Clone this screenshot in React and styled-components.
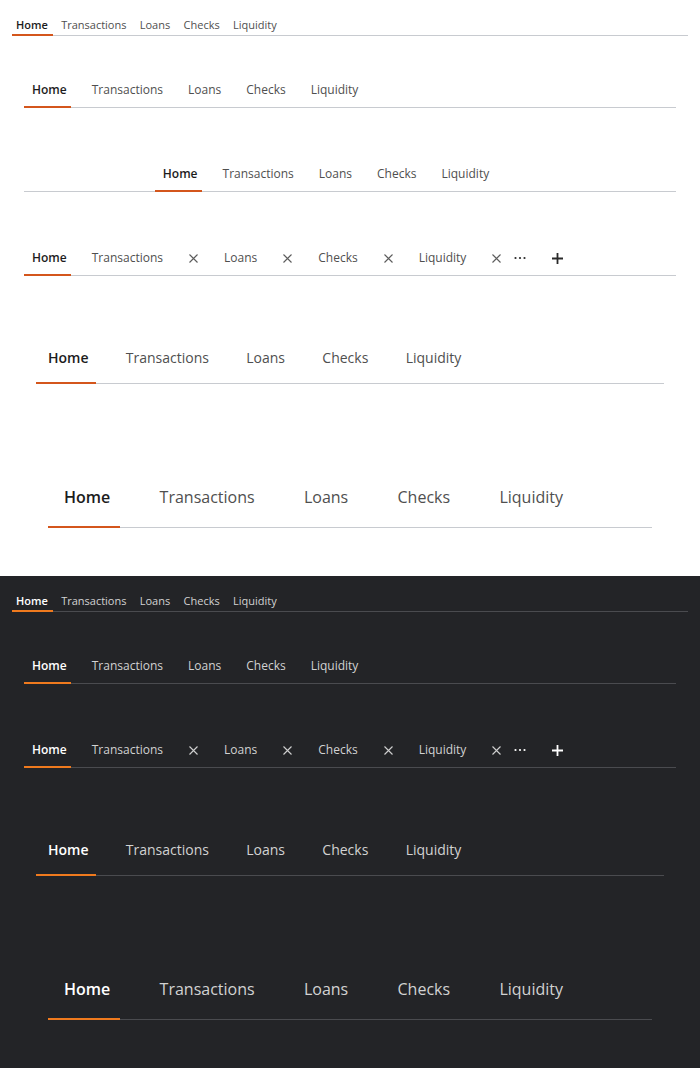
import React from "react";
import styled, { createGlobalStyle, ThemeProvider } from "styled-components";

const GlobalStyle = createGlobalStyle`
  html, body {
    margin: 0;
    padding: 0;
    background: #ffffff;
  }
  body {
    font-family: "Open Sans", "Noto Sans", "Liberation Sans", sans-serif;
    -webkit-font-smoothing: antialiased;
  }
`;

const lightTheme = {
  bg: "#ffffff",
  text: "#1c1c1c",
  muted: "#4f4f4f",
  line: "#c8cbd0",
  accent: "#d4561c",
  icon: "#5c5c5c",
  strong: "#2a2a2a",
};

const darkTheme = {
  bg: "#232427",
  text: "#ffffff",
  muted: "#d2d2d2",
  line: "#4a4b4f",
  accent: "#ef7a1e",
  icon: "#cfcfcf",
  strong: "#ffffff",
};

// sizes: font, tab height, padding left/right, gap before each tab, text nudge
const sizes = {
  tiny: { font: 11, height: 24, padL: 4, padR: 5, gap: 4.3, nudge: 2 },
  small: { font: 12, height: 36, padL: 8, padR: 4, gap: 13, nudge: 2 },
  medium: { font: 14, height: 52, padL: 12, padR: 7, gap: 18.3, nudge: 2 },
  large: { font: 16, height: 60, padL: 16, padR: 10, gap: 23.3, nudge: 0 },
};

const Section = styled.section`
  background: ${(p) => p.theme.bg};
  padding-bottom: 48px;
`;

const Example = styled.div`
  padding: ${(p) => p.$top}px ${(p) => p.$side}px 0;
`;

const TabList = styled.div`
  display: flex;
  align-items: center;
  justify-content: ${(p) => (p.$centered ? "center" : "flex-start")};
  padding-right: ${(p) => (p.$centered ? 52 : 0)}px;
  border-bottom: 1px solid ${(p) => p.theme.line};
`;

const Tab = styled.div`
  position: relative;
  box-sizing: border-box;
  display: flex;
  align-items: center;
  height: ${(p) => sizes[p.$size].height}px;
  margin-left: ${(p) => (p.$first ? 0 : p.$gap ?? sizes[p.$size].gap)}px;
  padding: ${(p) => sizes[p.$size].nudge}px ${(p) => sizes[p.$size].padR}px 0
    ${(p) => sizes[p.$size].padL}px;
  font-size: ${(p) => sizes[p.$size].font}px;
  line-height: 1;
  white-space: nowrap;
  font-weight: ${(p) => (p.$active ? 600 : 400)};
  color: ${(p) => (p.$active ? p.theme.text : p.theme.muted)};
  cursor: pointer;

  &::after {
    content: "";
    display: ${(p) => (p.$active ? "block" : "none")};
    position: absolute;
    left: 0;
    right: 0;
    bottom: -1px;
    height: 2px;
    background: ${(p) => p.theme.accent};
  }
`;

const CloseIcon = styled.svg`
  width: 9px;
  height: 9px;
  margin-left: 26px;
  stroke: ${(p) => p.theme.icon};
  stroke-width: 1.1;
  fill: none;
`;

const MoreButton = styled.svg`
  width: 12px;
  height: 4px;
  margin-left: 9px;
  margin-top: 2px;
  fill: ${(p) => p.theme.strong};
`;

const AddButton = styled.svg`
  width: 11px;
  height: 11px;
  margin-left: 26px;
  margin-top: 2px;
  stroke: ${(p) => p.theme.strong};
  stroke-width: 1.8;
  fill: none;
`;

const labels = ["Home", "Transactions", "Loans", "Checks", "Liquidity"];

const Tabs = ({ size, centered }) => (
  <TabList $centered={centered}>
    {labels.map((label, i) => (
      <Tab key={label} $size={size} $active={i === 0} $first={i === 0}>
        {label}
      </Tab>
    ))}
  </TabList>
);

const ClosableTabs = () => (
  <TabList>
    {labels.map((label, i) => (
      <Tab
        key={label}
        $size="small"
        $gap={i === 1 ? 13 : 14}
        $active={i === 0}
        $first={i === 0}
      >
        {label}
        {i > 0 && (
          <CloseIcon viewBox="0 0 9 9">
            <path d="M0.5 0.5 L8.5 8.5 M8.5 0.5 L0.5 8.5" />
          </CloseIcon>
        )}
      </Tab>
    ))}
    <MoreButton viewBox="0 0 12 4">
      <circle cx="1.5" cy="2" r="1.1" />
      <circle cx="6" cy="2" r="1.1" />
      <circle cx="10.5" cy="2" r="1.1" />
    </MoreButton>
    <AddButton viewBox="0 0 11 11">
      <path d="M5.5 0 V11 M0 5.5 H11" />
    </AddButton>
  </TabList>
);

const Variants = ({ withCentered }) => (
  <Section>
    <Example $top={11} $side={12}>
      <Tabs size="tiny" />
    </Example>
    <Example $top={35} $side={24}>
      <Tabs size="small" />
    </Example>
    {withCentered && (
      <Example $top={47} $side={24}>
        <Tabs size="small" centered />
      </Example>
    )}
    <Example $top={47} $side={24}>
      <ClosableTabs />
    </Example>
    <Example $top={55} $side={36}>
      <Tabs size="medium" />
    </Example>
    <Example $top={83} $side={48}>
      <Tabs size="large" />
    </Example>
  </Section>
);

export default function App() {
  return (
    <>
      <GlobalStyle />
      <ThemeProvider theme={lightTheme}>
        <Variants withCentered />
      </ThemeProvider>
      <ThemeProvider theme={darkTheme}>
        <Variants />
      </ThemeProvider>
    </>
  );
}
